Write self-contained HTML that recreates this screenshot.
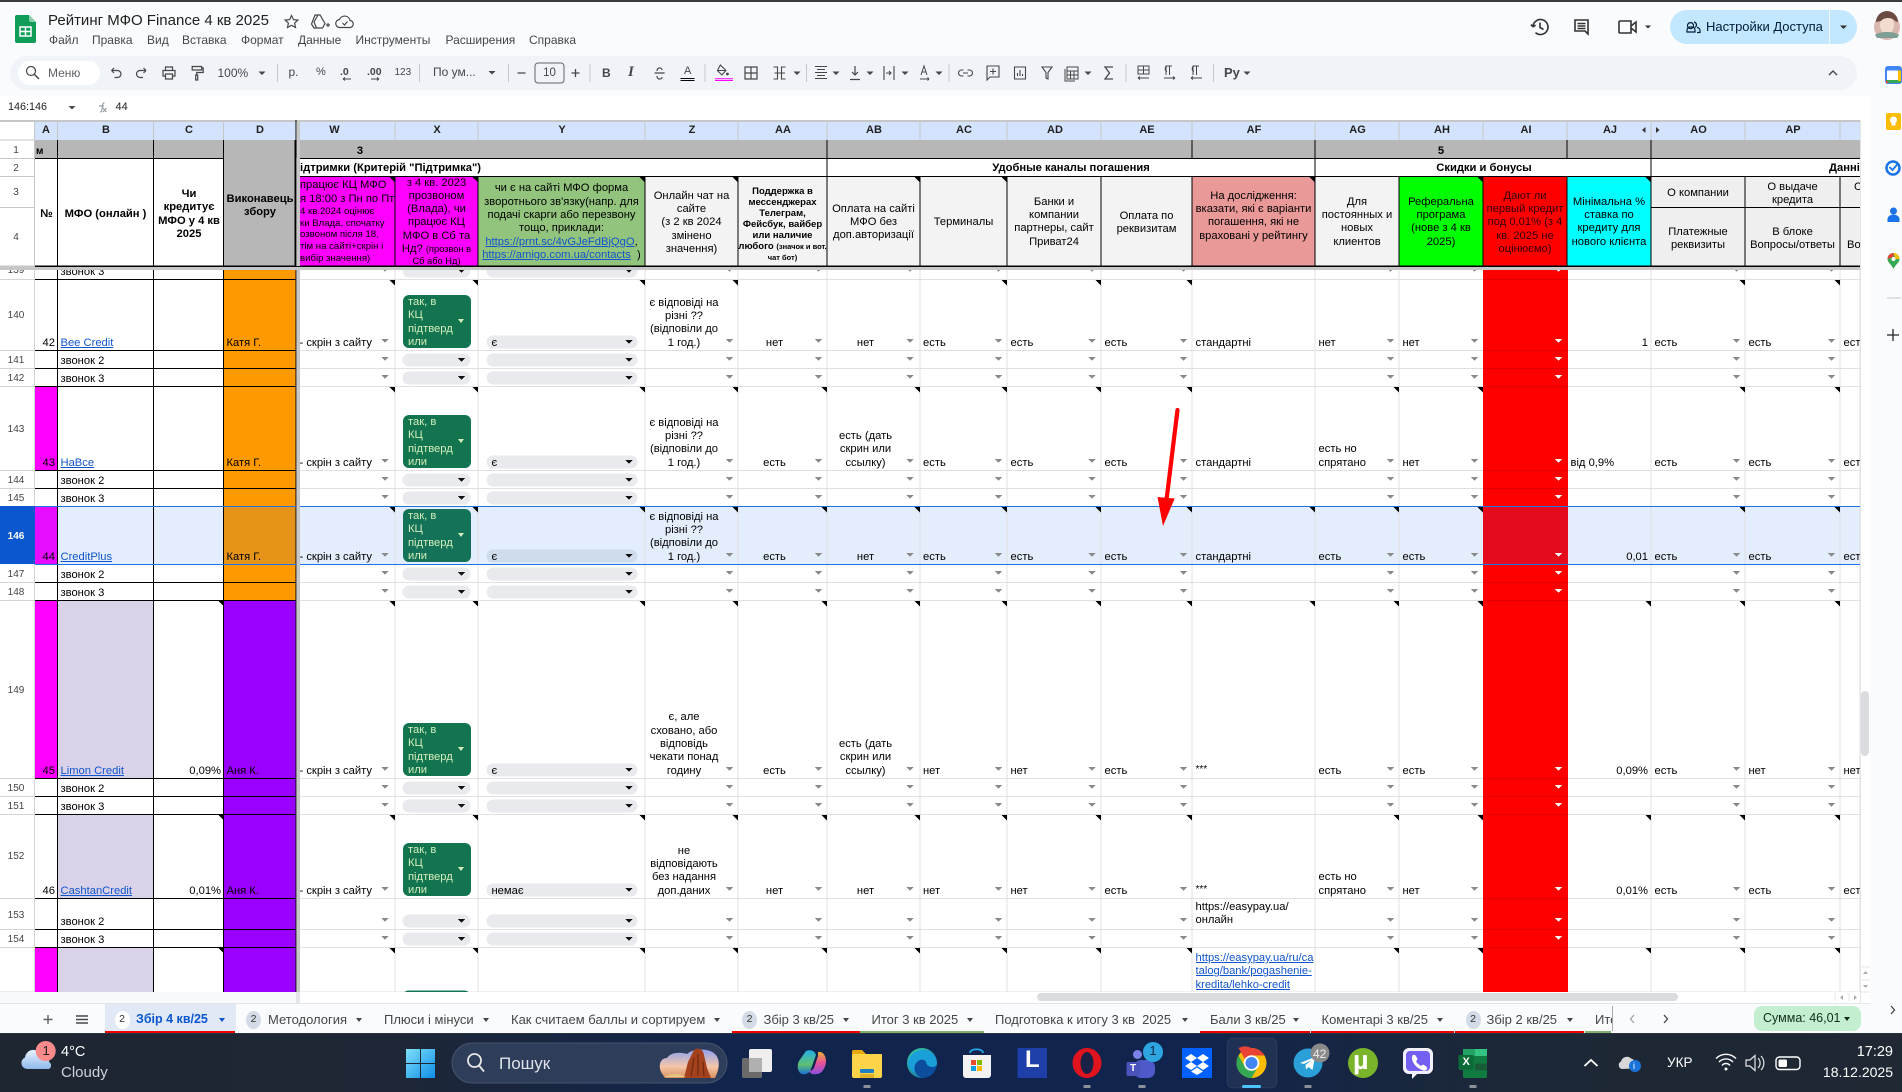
<!DOCTYPE html>
<html lang="uk"><head><meta charset="utf-8"><title>Рейтинг МФО Finance 4 кв 2025</title>
<style>
html,body{margin:0;padding:0;width:1902px;height:1092px;overflow:hidden;background:#f9fbfd;font-family:"Liberation Sans",sans-serif;color:#000}
svg{position:absolute;left:0;top:0}
.x{position:absolute;white-space:nowrap}
#grid{position:absolute;left:0;top:0;width:1860px;height:992px;overflow:hidden;font-size:11.2px;line-height:13.33px}
.h{position:absolute;text-align:center;white-space:nowrap;overflow:hidden;margin-top:1px}
.b{font-weight:bold}
.cl{position:absolute;top:123.5px;font-weight:bold;font-size:11px;color:#1f1f1f;text-align:center;transform:translateX(-50%)}
.rn{position:absolute;left:0;width:32px;text-align:center;font-size:10px;color:#444;line-height:12px;margin-top:1.5px}
.r{position:absolute;left:0;width:1860px;overflow:hidden}
.r>*{position:absolute;bottom:0;white-space:nowrap}
.A{left:36px;width:19px;text-align:right}.B{left:60.5px}.C{left:154px;width:67px;text-align:right}.D{left:226.5px}
.W{left:299.5px}.Yt{left:491.5px}
.Z{left:645px;width:78px;text-align:center}.AA{left:738px;width:73px;text-align:center}.AB{left:827px;width:77px;text-align:center}
.AC{left:923px}.AD{left:1010.5px}.AE{left:1104.5px}.AF{left:1195.5px}.AG{left:1318.5px}.AH{left:1402.5px}
.AJ{left:1568px;width:80px;text-align:right}.AJl{left:1570.5px}.AO{left:1654.5px}.AP{left:1748.5px}.AQ{left:1843.5px}
.r>.g{left:402.5px;width:68px;height:53px;bottom:2px;background:#137550;border-radius:6px;color:#d4edbc;box-sizing:border-box;padding-left:5.5px;padding-top:1px}
.g:after{content:"";position:absolute;left:55px;top:24px;border:3.5px solid transparent;border-top:4px solid #d4edbc;border-bottom:0}
a,.l{color:#1155cc;text-decoration:underline}
.m{position:absolute;top:33px;font-size:12px;color:#444746}
.tb{position:absolute;top:1012px;font-size:13px;line-height:15px;color:#444746;white-space:nowrap}
.bd{position:absolute;top:1011px;width:15px;height:18px;border-radius:50%;background:#d3dbe6;font-size:10.5px;text-align:center;line-height:17px;color:#333}
.tr{position:absolute;border:3.5px solid transparent;border-top:4px solid #444746;border-bottom:0;width:0;height:0}
.tbi{position:absolute;font-size:11.5px;color:#444746;white-space:nowrap;line-height:14px}
.w{position:absolute;color:#fff;white-space:nowrap}
</style></head><body>

<svg width="1902" height="1092" viewBox="0 0 1902 1092" shape-rendering="crispEdges" style="z-index:1">
<defs>
<g id="aa" fill="#8a8a8a"><path d="M381.5 0h7l-3.5 4zM726 0h7l-3.5 4zM815 0h7l-3.5 4zM906.5 0h7l-3.5 4zM995 0h7l-3.5 4zM1088.5 0h7l-3.5 4zM1180 0h7l-3.5 4zM1387 0h7l-3.5 4zM1471 0h7l-3.5 4zM1733 0h7l-3.5 4zM1828 0h7l-3.5 4z"/><path d="M1555 0h7l-3.5 4z" fill="#fff"/></g>
<g id="gc"><rect x="402.5" width="68" height="13" rx="6.5" fill="#e8eaed" shape-rendering="auto"/><rect x="486.5" width="151" height="13" rx="6.5" fill="#e8eaed" shape-rendering="auto"/><path d="M458 4.5h7l-3.5 4zM625.5 4.5h7l-3.5 4z" fill="#111"/></g>
<g id="yc"><rect x="486.5" width="151" height="13" rx="6.5" shape-rendering="auto"/><path d="M625.5 4.5h7l-3.5 4z" fill="#111"/></g>
<path id="nn" d="M389.500 0h5.500v5.500zM472.500 0h5.500v5.500zM639.500 0h5.500v5.500zM732.500 0h5.500v5.500zM821.500 0h5.500v5.500zM914.500 0h5.500v5.500zM1001.500 0h5.500v5.500zM1095.500 0h5.500v5.500zM1186.500 0h5.500v5.500zM1393.500 0h5.500v5.500zM1477.500 0h5.500v5.500zM1739.500 0h5.500v5.500zM1834.500 0h5.500v5.500z" fill="#000" shape-rendering="auto"/>
<path id="n3" d="M218.500 0h5.500v5.500zM1645.500 0h5.500v5.500z" fill="#000" shape-rendering="auto"/>
<path id="nf" d="M1309.500 0h5.500v5.500z" fill="#000" shape-rendering="auto"/>
</defs>
<rect x="0" y="96" width="1870" height="24" fill="#fff"/>
<rect x="0" y="120" width="1860" height="872" fill="#fff"/>
<!-- orange / purple -->
<rect x="224" y="270" width="72" height="330" fill="#ff9900"/>
<rect x="224" y="600" width="72" height="392" fill="#9900ff"/>
<!-- selected row -->
<rect x="35" y="506" width="261" height="58" fill="#e3edfc"/>
<rect x="300" y="506" width="1560" height="58" fill="#e3edfc"/>
<rect x="224" y="506" width="72" height="58" fill="#e59419"/>
<!-- magenta / lavender -->
<rect x="35" y="386" width="22" height="84" fill="#ff00ff"/>
<rect x="35" y="506" width="22" height="58" fill="#e80cff"/>
<rect x="35" y="600" width="22" height="178" fill="#ff00ff"/>
<rect x="35" y="947" width="22" height="45" fill="#ff00ff"/>
<rect x="57" y="600" width="96" height="178" fill="#d9d2e9"/>
<rect x="57" y="814" width="96" height="84" fill="#d9d2e9"/>
<rect x="57" y="947" width="96" height="45" fill="#d9d2e9"/>
<!-- gray grid -->
<path d="M395 270V992M478 270V992M645 270V992M738 270V992M827 270V992M920 270V992M1007 270V992M1101 270V992M1192 270V992M1315 270V992M1399 270V992M1651 270V992M1745 270V992M1840 270V992M1860 270V992" stroke="#e0e0e0" fill="none"/>
<path d="M300 279.500H1860M300 350.500H1860M300 368.500H1860M300 386.500H1860M300 470.500H1860M300 488.500H1860M300 582.500H1860M300 600.500H1860M300 778.500H1860M300 796.500H1860M300 814.500H1860M300 898.500H1860M300 929.500H1860M300 947.500H1860M300 992H1860" stroke="#e0e0e0" fill="none"/>
<path d="M0 279.500H35M0 350.500H35M0 368.500H35M0 386.500H35M0 470.500H35M0 488.500H35M0 582.500H35M0 600.500H35M0 778.500H35M0 796.500H35M0 814.500H35M0 898.500H35M0 929.500H35M0 947.500H35M0 992H35M34.500 120V992" stroke="#d4d4d4" fill="none"/>
<rect x="1483" y="270" width="85" height="722" fill="#ff0000"/>
<rect x="1483" y="506" width="85" height="58" fill="#e40c1c"/>
<path d="M1483 279.500H1568M1483 350.500H1568M1483 368.500H1568M1483 386.500H1568M1483 470.500H1568M1483 488.500H1568M1483 582.500H1568M1483 600.500H1568M1483 778.500H1568M1483 796.500H1568M1483 814.500H1568M1483 898.500H1568M1483 929.500H1568M1483 947.500H1568" stroke="#e00000" fill="none"/>
<!-- black frozen grid -->
<path d="M35 279.500H296M35 350.500H296M35 368.500H296M35 386.500H296M35 470.500H296M35 488.500H296M35 582.500H296M35 600.500H296M35 778.500H296M35 796.500H296M35 814.500H296M35 898.500H296M35 929.500H296M35 947.500H296" stroke="#000" fill="none"/>
<path d="M57.500 270V992M153.500 270V992M223.500 270V992M296 270V992" stroke="#000" fill="none"/>
<!-- chips -->
<use href="#gc" y="264.500"/><use href="#gc" y="353.500"/><use href="#gc" y="371.500"/><use href="#gc" y="473.500"/><use href="#gc" y="491.500"/><use href="#gc" y="567.500"/><use href="#gc" y="585.500"/><use href="#gc" y="781.500"/><use href="#gc" y="799.500"/><use href="#gc" y="914.500"/><use href="#gc" y="932.500"/>
<use href="#yc" y="335.500" fill="#e8eaed"/><use href="#yc" y="455.500" fill="#e8eaed"/><use href="#yc" y="549.500" fill="#cfdcec"/><use href="#yc" y="763.500" fill="#e8eaed"/><use href="#yc" y="883.500" fill="#e8eaed"/>
<rect x="402.500" y="990.500" width="68" height="12" rx="6" fill="#137550" shape-rendering="auto"/>
<!-- arrows -->
<use href="#aa" y="268"/><use href="#aa" y="339"/><use href="#aa" y="357"/><use href="#aa" y="375"/><use href="#aa" y="459"/><use href="#aa" y="477"/><use href="#aa" y="495"/><use href="#aa" y="553"/><use href="#aa" y="571"/><use href="#aa" y="589"/><use href="#aa" y="767"/><use href="#aa" y="785"/><use href="#aa" y="803"/><use href="#aa" y="887"/><use href="#aa" y="918"/><use href="#aa" y="936"/>
<!-- notes -->
<path d="M389.500 280h5.500v5.500zM472.500 280h5.500v5.500zM639.500 280h5.500v5.500zM732.500 280h5.500v5.500zM1001.500 280h5.500v5.500zM1095.500 280h5.500v5.500zM1186.500 280h5.500v5.500zM1739.500 280h5.500v5.500zM1834.500 280h5.500v5.500z" fill="#000" shape-rendering="auto"/>
<use href="#nn" y="387"/><use href="#nn" y="507"/><use href="#nf" y="507"/><use href="#nn" y="601"/><use href="#n3" y="601"/><use href="#nf" y="601"/><use href="#nn" y="815"/><use href="#n3" y="815"/><use href="#nn" y="948"/><use href="#n3" y="948"/>
<!-- selection -->
<rect x="0" y="506" width="35" height="58" fill="#0b57d0"/>
<path d="M35 506.500H296M300 506.500H1860M35 564.500H296M300 564.500H1860" stroke="#1a73e8" fill="none"/>
<!-- column headers -->
<rect x="0" y="120" width="1860" height="150" fill="#fff"/>
<rect x="35" y="120" width="261" height="20" fill="#d3e3fd"/>
<rect x="300" y="120" width="1560" height="20" fill="#d3e3fd"/>
<path d="M0 120.500H1860M0 140H35M0 158.500H35M0 176.500H35M0 207.500H35M0 266H35" stroke="#c7c7c7" fill="none"/>
<path d="M0 121.500H1860" stroke="#c7c7c7" fill="none"/>
<path d="M34.500 120V270M57.500 122V140M153.500 122V140M223.500 122V140M395 122V140M478 122V140M645 122V140M738 122V140M827 122V140M920 122V140M1007 122V140M1101 122V140M1192 122V140M1315 122V140M1399 122V140M1483 122V140M1567 122V140M1651 122V140M1745 122V140M1840 122V140" stroke="#c4c7c5" fill="none"/>
<path d="M1642 130l3.500-3v6zM1656 127l3.500 3-3.500 3z" fill="#333" shape-rendering="auto"/>
<!-- header rows -->
<rect x="35" y="140" width="1825" height="18" fill="#b7b7b7"/>
<rect x="224" y="140" width="72" height="126" fill="#b7b7b7"/>
<rect x="300" y="177" width="95" height="89" fill="#ff00ff"/>
<rect x="395" y="177" width="83" height="89" fill="#ff00ff"/>
<rect x="478" y="177" width="167" height="89" fill="#93c47d"/>
<rect x="645" y="177" width="547" height="89" fill="#f3f3f3"/>
<rect x="1192" y="177" width="123" height="89" fill="#ea9999"/>
<rect x="1315" y="177" width="84" height="89" fill="#f3f3f3"/>
<rect x="1399" y="177" width="84" height="89" fill="#00ff00"/>
<rect x="1483" y="177" width="84" height="89" fill="#ff0000"/>
<rect x="1567" y="177" width="84" height="89" fill="#00ffff"/>
<rect x="1651" y="177" width="209" height="89" fill="#efefef"/>
<path d="M35 158.500H224M300 158.500H1860M300 176.500H1860M35 266H296M300 266H1860M1651 207.500H1860" stroke="#000" fill="none"/>
<path d="M57.500 140V266M153.500 140V266M223.500 140V266M296 120V266M295 140V266" stroke="#000" fill="none"/>
<path d="M827 140V177M1192 140V158M1315 140V177M1567 140V158M1651 140V177M395 177V266M478 177V266M645 177V266M738 177V266M827 177V266M920 177V266M1007 177V266M1101 177V266M1192 177V266M1315 177V266M1399 177V266M1483 177V266M1567 177V266M1651 177V266M1745 177V266M1840 177V266" stroke="#000" fill="none"/>
<path d="M389.500 177h5.500v5.500zM472.500 177h5.500v5.500zM639.500 177h5.500v5.500zM732.500 177h5.500v5.500zM914.500 177h5.500v5.500zM1001.500 177h5.500v5.500zM1309.500 177h5.500v5.500zM1477.500 177h5.500v5.500zM1645.500 177h5.500v5.500z" fill="#000" shape-rendering="auto"/>
<!-- freeze bars -->
<rect x="297" y="120" width="3" height="872" fill="#c7c7c7"/>
<rect x="0" y="266" width="1860" height="4" fill="#c7c7c7"/>
<path d="M0 266.500H1860" stroke="#000" fill="none"/>
<rect x="0" y="266" width="35" height="1" fill="#c7c7c7"/>
<rect x="296" y="266" width="4" height="1" fill="#000"/>
<!-- lower bars -->
<rect x="0" y="992" width="1860" height="11" fill="#fff"/>
<rect x="0" y="992" width="296" height="11" fill="#f8f9fa"/>
<rect x="296" y="992" width="4" height="11" fill="#e3e5e8"/>
<rect x="1037" y="993" width="641" height="8" rx="4" fill="#dadce0" shape-rendering="auto"/>
<path d="M1835 993V1001M1849 993V1001" stroke="#e5e5e5" fill="none"/>
<path d="M1843 995l-3 2.500 3 2.500zM1854 995l3 2.500-3 2.500zM1866 972l-2.500 3h5zM1866 1000l-2.500-3h5z" fill="#aaa" shape-rendering="auto"/>
<rect x="1860" y="120" width="10" height="883" fill="#fff"/>
<path d="M1860.500 120V1003" stroke="#e4e4e4" fill="none"/>
<rect x="1861" y="691" width="8" height="65" rx="4" fill="#dadce0" shape-rendering="auto"/>
<path d="M1860 967H1870M1860 980H1870M1860 992H1870" stroke="#e6e6e6" fill="none"/>
<path d="M1865.500 971l-2.500 3h5zM1865.500 988l-2.500-3h5z" fill="#aaa" shape-rendering="auto"/>
<rect x="0" y="1003" width="1870" height="1" fill="#e3e5e8"/>
<rect x="0" y="0" width="1902" height="2" fill="#3c3c3c"/>
</svg>

<div id="grid" style="z-index:2">
<div class="cl" style="left:46px">A</div><div class="cl" style="left:106px">B</div><div class="cl" style="left:189px">C</div><div class="cl" style="left:260px">D</div><div class="cl" style="left:334.500px">W</div><div class="cl" style="left:437px">X</div><div class="cl" style="left:562px">Y</div><div class="cl" style="left:692px">Z</div><div class="cl" style="left:783px">AA</div><div class="cl" style="left:874px">AB</div><div class="cl" style="left:964px">AC</div><div class="cl" style="left:1055px">AD</div><div class="cl" style="left:1147px">AE</div><div class="cl" style="left:1254px">AF</div><div class="cl" style="left:1357.500px">AG</div><div class="cl" style="left:1442px">AH</div><div class="cl" style="left:1526px">AI</div><div class="cl" style="left:1610px">AJ</div><div class="cl" style="left:1698.500px">AO</div><div class="cl" style="left:1793px">AP</div>

<div class="rn" style="top:143px">1</div><div class="rn" style="top:161px">2</div><div class="rn" style="top:185px">3</div><div class="rn" style="top:230px">4</div>
<div class="h b" style="left:36px;top:144px;font-size:10px">м</div>
<div class="h b" style="left:340px;top:144px;width:40px">3</div>
<div class="h b" style="left:1421px;top:144px;width:40px">5</div>
<div class="h b" style="left:36px;top:207px;width:21px">№</div>
<div class="h b" style="left:58px;top:207px;width:95px">МФО (онлайн )</div>
<div class="h b" style="left:154px;top:187px;width:70px">Чи<br>кредитує<br>МФО у 4 кв<br>2025</div>
<div class="h b" style="left:225px;top:192px;width:70px">Виконавець<br>збору</div>
<div class="h b" style="left:300px;top:161px;width:300px;text-align:left">ідтримки (Критерій "Підтримка")</div>
<div class="h b" style="left:920px;top:161px;width:302px">Удобные каналы погашения</div>
<div class="h b" style="left:1400px;top:161px;width:168px">Скидки и бонусы</div>
<div class="h b" style="left:1829px;top:161px;width:31px;text-align:left">Данні</div>

<div class="h" style="left:300px;top:178.300px;width:95px;text-align:left">працює КЦ МФО<br>я 18:00 з Пн по Пт</div>
<div class="h" style="left:300px;top:205px;width:95px;text-align:left;font-size:9.6px;line-height:11.700px">4 кв.2024 оцінює<br>ки Влада, спочатку<br>озвоном після 18,<br>тім на сайті+скрін і<br>вибір значення)</div>
<div class="h" style="left:395px;top:175.500px;width:83px;height:80px">з 4 кв. 2023<br>прозвоном<br>(Влада), чи<br>працює КЦ<br>МФО в Сб та<br>Нд? <span style="font-size:9.300px">(прозвон в</span></div>
<div class="h" style="left:395px;top:254px;width:83px;font-size:9.300px;line-height:12px">Сб або Нд)</div>
<div class="h" style="left:478px;top:181.300px;width:167px">чи є на сайті МФО форма<br>зворотнього зв'язку(напр. для<br>подачі скарги або перезвону<br>тощо, приклади:<br><span class="l">https://prnt.sc/4vGJeFdBjQgO</span>,<br><span class="l">https://amigo.com.ua/contacts</span>&nbsp; )</div>
<div class="h" style="left:645px;top:188.800px;width:93px">Онлайн чат на<br>сайте<br>(з 2 кв 2024<br>змінено<br>значення)</div>
<div class="h b" style="left:738px;top:184.500px;width:89px;font-size:9.500px;line-height:11px">Поддержка в<br>мессенджерах<br>Телеграм,<br>Фейсбук, вайбер<br>или наличие<br>любого <span style="font-size:7.500px">(значок и вот.</span><br><span style="font-size:7.500px">чат бот)</span></div>
<div class="h" style="left:827px;top:201.700px;width:93px">Оплата на сайті<br>МФО без<br>доп.авторизації</div>
<div class="h" style="left:920px;top:214.500px;width:87px">Терминалы</div>
<div class="h" style="left:1007px;top:194.700px;width:94px">Банки и<br>компании<br>партнеры, сайт<br>Приват24</div>
<div class="h" style="left:1101px;top:208.700px;width:91px">Оплата по<br>реквизитам</div>
<div class="h" style="left:1192px;top:188.800px;width:123px">На дослідження:<br>вказати, які є варіанти<br>погашення, які не<br>враховані у рейтингу</div>
<div class="h" style="left:1315px;top:194.700px;width:84px">Для<br>постоянных и<br>новых<br>клиентов</div>
<div class="h" style="left:1399px;top:194.700px;width:84px">Реферальна<br>програма<br>(нове з 4 кв<br>2025)</div>
<div class="h" style="left:1483px;top:188.800px;width:84px;color:#300">Дают ли<br>первый кредит<br>под 0,01% (з 4<br>кв. 2025 не<br>оцінюємо)</div>
<div class="h" style="left:1567px;top:194.700px;width:84px">Мінімальна %<br>ставка по<br>кредиту для<br>нового клієнта</div>
<div class="h" style="left:1651px;top:186px;width:94px">О компании</div>
<div class="h" style="left:1745px;top:180px;width:95px">О выдаче<br>кредита</div>
<div class="h" style="left:1854px;top:180px;width:6px;text-align:left">О</div>
<div class="h" style="left:1651px;top:224.700px;width:94px">Платежные<br>реквизиты</div>
<div class="h" style="left:1745px;top:224.700px;width:95px">В блоке<br>Вопросы/ответы</div>
<div class="h" style="left:1847px;top:238px;width:13px;text-align:left">Во</div>

<!-- row numbers -->
<div style="position:absolute;left:0;top:270px;width:35px;height:9px;overflow:hidden"><div class="rn" style="top:-7px">139</div></div>
<div class="rn" style="top:308px">140</div><div class="rn" style="top:353px">141</div><div class="rn" style="top:371px">142</div><div class="rn" style="top:422px">143</div><div class="rn" style="top:473px">144</div><div class="rn" style="top:491px">145</div>
<div class="rn b" style="top:529px;color:#fff">146</div>
<div class="rn" style="top:567px">147</div><div class="rn" style="top:585px">148</div><div class="rn" style="top:683px">149</div><div class="rn" style="top:781px">150</div><div class="rn" style="top:799px">151</div><div class="rn" style="top:849px">152</div><div class="rn" style="top:908px">153</div><div class="rn" style="top:932px">154</div>

<div class="r" style="top:270px;height:9px"><span class="B">звонок 3</span></div>

<div class="r" style="top:280px;height:70px"><span class="A">42</span><span class="B l">Bee Credit</span><span class="D">Катя Г.</span><span class="W">- скрін з сайту</span>
<div class="g">так, в<br>КЦ<br>підтверд<br>или</div><span class="Yt">є</span>
<div class="Z">є відповіді на<br>різні ??<br>(відповіли до<br>1 год.)</div><span class="AA">нет</span><span class="AB">нет</span><span class="AC">есть</span><span class="AD">есть</span><span class="AE">есть</span><span class="AF">стандартні</span><span class="AG">нет</span><span class="AH">нет</span><span class="AJ">1</span><span class="AO">есть</span><span class="AP">есть</span><span class="AQ">есть</span></div>
<div class="r" style="top:351px;height:17px"><span class="B">звонок 2</span></div>
<div class="r" style="top:369px;height:17px"><span class="B">звонок 3</span></div>

<div class="r" style="top:387px;height:83px"><span class="A">43</span><span class="B l">НаВсе</span><span class="D">Катя Г.</span><span class="W">- скрін з сайту</span>
<div class="g">так, в<br>КЦ<br>підтверд<br>или</div><span class="Yt">є</span>
<div class="Z">є відповіді на<br>різні ??<br>(відповіли до<br>1 год.)</div><span class="AA">есть</span><div class="AB">есть (дать<br>скрин или<br>ссылку)</div><span class="AC">есть</span><span class="AD">есть</span><span class="AE">есть</span><span class="AF">стандартні</span><div class="AG">есть но<br>спрятано</div><span class="AH">нет</span><span class="AJl">від 0,9%</span><span class="AO">есть</span><span class="AP">есть</span><span class="AQ">есть</span></div>
<div class="r" style="top:471px;height:17px"><span class="B">звонок 2</span></div>
<div class="r" style="top:489px;height:17px"><span class="B">звонок 3</span></div>

<div class="r" style="top:507px;height:57px"><span class="A">44</span><span class="B l">CreditPlus</span><span class="D">Катя Г.</span><span class="W">- скрін з сайту</span>
<div class="g" style="background:#137258">так, в<br>КЦ<br>підтверд<br>или</div><span class="Yt">є</span>
<div class="Z">є відповіді на<br>різні ??<br>(відповіли до<br>1 год.)</div><span class="AA">есть</span><span class="AB">нет</span><span class="AC">есть</span><span class="AD">есть</span><span class="AE">есть</span><span class="AF">стандартні</span><span class="AG">есть</span><span class="AH">есть</span><span class="AJ">0,01</span><span class="AO">есть</span><span class="AP">есть</span><span class="AQ">есть</span></div>
<div class="r" style="top:565px;height:17px"><span class="B">звонок 2</span></div>
<div class="r" style="top:583px;height:17px"><span class="B">звонок 3</span></div>

<div class="r" style="top:601px;height:177px"><span class="A">45</span><span class="B l">Limon Credit</span><span class="C">0,09%</span><span class="D">Аня К.</span><span class="W">- скрін з сайту</span>
<div class="g">так, в<br>КЦ<br>підтверд<br>или</div><span class="Yt">є</span>
<div class="Z">є, але<br>сховано, або<br>відповідь<br>чекати понад<br>годину</div><span class="AA">есть</span><div class="AB">есть (дать<br>скрин или<br>ссылку)</div><span class="AC">нет</span><span class="AD">нет</span><span class="AE">есть</span><span class="AF" style="font-size:10px;bottom:1.500px">***</span><span class="AG">есть</span><span class="AH">есть</span><span class="AJ">0,09%</span><span class="AO">есть</span><span class="AP">нет</span><span class="AQ">нет</span></div>
<div class="r" style="top:779px;height:17px"><span class="B">звонок 2</span></div>
<div class="r" style="top:797px;height:17px"><span class="B">звонок 3</span></div>

<div class="r" style="top:815px;height:83px"><span class="A">46</span><span class="B l">CashtanCredit</span><span class="C">0,01%</span><span class="D">Аня К.</span><span class="W">- скрін з сайту</span>
<div class="g">так, в<br>КЦ<br>підтверд<br>или</div><span class="Yt">немає</span>
<div class="Z">не<br>відповідають<br>без надання<br>доп.даних</div><span class="AA">нет</span><span class="AB">нет</span><span class="AC">нет</span><span class="AD">нет</span><span class="AE">есть</span><span class="AF" style="font-size:10px;bottom:1.500px">***</span><div class="AG">есть но<br>спрятано</div><span class="AH">нет</span><span class="AJ">0,01%</span><span class="AO">есть</span><span class="AP">есть</span><span class="AQ">есть</span></div>
<div class="r" style="top:899px;height:30px"><span class="B">звонок 2</span><div class="AF" style="bottom:1.500px">https://easypay.ua/<br>онлайн</div></div>
<div class="r" style="top:930px;height:17px"><span class="B">звонок 3</span></div>
<div class="h l" style="left:1195.500px;top:951px;width:119px;text-align:left">https://easypay.ua/ru/ca<br>talog/bank/pogashenie-<br>kredita/lehko-credit</div>
</div>

<!-- top bar -->
<div class="x" style="left:48px;top:12px;font-size:15px;line-height:18px;color:#1f1f1f;z-index:3">Рейтинг МФО Finance 4 кв 2025</div>
<div style="position:absolute;left:0;top:0;z-index:3">
<span class="m" style="left:49px">Файл</span><span class="m" style="left:92px">Правка</span><span class="m" style="left:147px">Вид</span><span class="m" style="left:182px">Вставка</span><span class="m" style="left:241px">Формат</span><span class="m" style="left:298px">Данные</span><span class="m" style="left:355.500px">Инструменты</span><span class="m" style="left:445.500px">Расширения</span><span class="m" style="left:529px">Справка</span>
</div>
<div class="x" style="left:1706px;top:19px;font-size:13px;line-height:16px;color:#001d35;z-index:3">Настройки Доступа</div>
<svg width="1902" height="1092" style="z-index:1">
<rect x="10" y="56" width="1847" height="34" rx="17" fill="#f0f4f9"/>
<rect x="18" y="61" width="82" height="24" rx="12" fill="#fff"/>
<rect x="1670" y="10" width="187" height="34" rx="17" fill="#c2e7ff"/>
<path d="M1829.500 10V44" stroke="#f0f8ff"/>
<rect x="535" y="63" width="29" height="20" rx="3" fill="none" stroke="#5f6368"/>
<path d="M277.500 64V82M419.500 64V82M508.500 64V82M590 64V82M705 64V82M806.500 64V82M949 64V82M1126 64V82M1213.500 64V82" stroke="#c7c7c7"/>
</svg>
<svg width="1902" height="1092" style="z-index:3" fill="none" stroke="#444746" stroke-width="1.200">
<!-- sheets logo -->
<path d="M15 17a2 2 0 0 1 2-2h12l7 7v19a2 2 0 0 1-2 2H17a2 2 0 0 1-2-2z" fill="#0f9d58" stroke="none"/>
<path d="M29 15l7 7h-5a2 2 0 0 1-2-2z" fill="#87ceac" stroke="none"/>
<path d="M20 27h11v9H20zM25.500 27v9M20 31.500h11" stroke="#fff" stroke-width="1.500"/>
<!-- star, drive, cloud -->
<path d="M291.500 15.500l1.900 4.100 4.500.5-3.300 3 .9 4.400-4-2.200-4 2.200.9-4.400-3.300-3 4.500-.5z"/>
<path d="M315 15h5l5 8.500-2.500 4.500h-8.500L311.500 24zM318 15l-4 7 2.500 6M326 25h4M328 23v4"/>
<path d="M340 27.500a4 4 0 0 1-.5-8 5.500 5.500 0 0 1 10.500 1 3.500 3.500 0 0 1-.5 7zM342.500 23l2 2 3-3.500"/>
<!-- history, comment, meet, share -->
<path d="M1533 27a7.500 7.500 0 1 1 2.500 5.600M1533 27l-2-2.500M1533 27l2.500-2M1540 22.500V27.500l3.500 2" stroke-width="1.600" stroke="#333"/>
<path d="M1575 20h13v14l-3-3h-10zM1577.500 23.500h8M1577.500 26h8M1577.500 28.500h8" stroke-width="1.600" stroke="#333"/>
<path d="M1620 21h11v12h-11a1 1 0 0 1-1-1V22a1 1 0 0 1 1-1zM1631 26l5-4v10l-5-4" stroke-width="1.600" stroke="#333"/>
<path d="M1645 25.500h6l-3 3zM1840 25.500h7l-3.500 3.500z" fill="#333" stroke="none"/>
<path d="M1687 32v-2a3 3 0 0 1 3-3h2a3 3 0 0 1 3 3v2zM1688 24a3 3 0 1 0 5 0 3 3 0 0 0-5 0zM1694 22a3 3 0 0 1 1 5.500M1697 32.500h3v-2a3 3 0 0 0-3-3" stroke="#001d35"/>
<circle cx="1887" cy="27" r="13" fill="#d9b6ae" stroke="none"/>
<ellipse cx="1887" cy="25" rx="7" ry="9" fill="#f1dccf" stroke="none"/>
<path d="M1876 22a11 11 0 0 1 22 0l-3-1c-3-4-11-4-14 0z" fill="#6a4a42" stroke="none"/>
<path d="M1875 35c4-4 20-4 24 0l-2 3h-20z" fill="#7f9f96" stroke="none"/>
<!-- toolbar icons -->
<g transform="translate(32.500,72.500)"><circle cx="-1.500" cy="-1.500" r="4.500"/><path d="M2 2l4.500 4.500" stroke-width="1.500"/></g>
<g transform="translate(115.500,73)"><path d="M-4-2.500h6a3.500 3.500 0 0 1 0 7h-3M-4-2.500l2.500-2.500M-4-2.500l2.500 2.500"/></g>
<g transform="translate(142,73)"><path d="M4-2.500h-6a3.500 3.500 0 0 0 0 7h3M4-2.500l-2.500-2.500M4-2.500l-2.500 2.500"/></g>
<g transform="translate(169,73)"><path d="M-3.500-2.500v-3.500h7v3.500M-3.500 3H-6v-5.500h12V3H3.500M-3.500 1h7v5h-7z"/></g>
<g transform="translate(196.700,73)"><path d="M-4.500-6.500H5v3.500H-4.500zM5-5H6.500V-.5H0V2M-1 2h2v5h-2z"/></g>
<path d="M258.500 71.500h7l-3.500 3.500zM488.500 71h7l-3.500 3.500zM793.500 71.500h7l-3.500 3.500zM832.500 71.500h7l-3.500 3.500zM866.500 71.500h7l-3.500 3.500zM901.500 71.500h7l-3.500 3.500zM935.500 71.500h7l-3.500 3.500zM1084.500 71.500h7l-3.500 3.500zM1243.500 71.500h7l-3.500 3.500z" fill="#444746" stroke="none"/>
<path d="M343 79h8M343 79l2-1.500M343 79l2 1.500M371 79h8M379 79l-2-1.500M379 79l-2 1.500" stroke-width="1"/>
<path d="M517.500 73h8M571.500 73h8M575.500 69v8" stroke-width="1.300"/>
<path d="M1829 75l4-4 4 4" stroke-width="1.400"/>
<g transform="translate(659.600,73)"><path d="M-5 0H5M-2.500-2a2.500 2.500 0 0 1 5-1M-2.500 3a2.500 2.500 0 0 0 5 1"/></g>
<g transform="translate(722.400,72)" ><path d="M-2-7l5.500 5.500L-.5 3-5-1.500zM-5-1.500h8" stroke-width="1.100"/><circle cx="5" cy="2" r="1.400" fill="#444746" stroke="none"/></g>
<path d="M715 78.700h18M715 80.500h18" stroke="#ff00ff" stroke-width="1"/>
<path d="M680.500 78.500h14" stroke="#000" stroke-width="1"/><path d="M680.500 80.500h14" stroke="#000" stroke-width="1"/>
<path d="M745 67h12v12h-12zM751 67v12M745 73h12"/>
<path d="M773.500 67h4v12h-4M785.500 67h-4v12h4M779.500 73h-2M781.500 73h-2M774.500 73h2.500M785 73h-3" stroke-width="1.100"/>
<path d="M815 66.500h12M817 69.500h8M815 72.500h12M817 75.500h8M815 78.500h12" stroke-width="1.100"/>
<path d="M855 66v9M852 72l3 3 3-3M850 79.500h10" stroke-width="1.200"/>
<path d="M884 66v14M894 66v14M886 73h5M889 71l2 2-2 2" stroke-width="1.100"/>
<path d="M921 75l3-9 3 9M922 72h4M920 79h9M929 79l-1.500-1.500M929 79l-1.500 1.500" stroke-width="1"/>
<path d="M963.500 70h-2a3 3 0 0 0 0 6h2M967.500 70h2a3 3 0 0 1 0 6h-2M963 73h5" stroke-width="1.100"/>
<path d="M987 66h12v11h-9l-3 3zM993 68.500v6M990 71.500h6" stroke-width="1.100"/>
<path d="M1014.500 67h11v12h-11zM1017.500 76v-3M1020 76v-6M1022.500 76v-2" stroke-width="1.100"/>
<path d="M1042 67h10l-4 5.500V79l-2-1v-5.500z" stroke-width="1.100"/>
<path d="M1067 67h11v12h-11zM1067 71h11M1070.500 71v8M1074 71v8M1067 75h11M1065 69v12h10" stroke-width="1"/>
<path d="M1113 67h-8l4.500 6-4.500 6h8" stroke-width="1.300"/>
<path d="M1138 66h11v8h-11zM1143.500 66v8M1138 70h11M1138 78h11M1138 78l2-1.500M1138 78l2 1.500" stroke-width="1"/>
<path d="M1166 75V66h6M1169.500 75V66M1167 66a3 3 0 0 0 0 5.500M1164 78h11M1175 78l-2-1.500M1175 78l-2 1.500" stroke-width="1"/>
<path d="M1193 75V66h6M1196.500 75V66M1194 66a3 3 0 0 0 0 5.500M1191 78h11M1191 78l2-1.500M1191 78l2 1.500" stroke-width="1"/>
<path d="M68.500 106h7l-3.500 3.500z" fill="#444746" stroke="none"/>
<path d="M100 112c2 0 2-2 2.300-5s.5-4 2.200-4M99 106h5M103 108l3.500 4M106.500 108l-3.500 4" stroke="#9aa0a6"/>
<!-- tab bar icons -->
<path d="M48 1015v9M43.500 1019.500h9" stroke="#5f6368" stroke-width="1.400"/>
<path d="M76 1016h12M76 1019.500h12M76 1023h12" stroke="#444746" stroke-width="1.400"/>
<path d="M1634 1015l-3.500 4 3.500 4" stroke="#a0a4a8" stroke-width="1.300"/>
<path d="M1664 1015l3.500 4-3.500 4" stroke="#444746" stroke-width="1.300"/>
<path d="M1891 1006l3.500 4-3.500 4" stroke="#444746" stroke-width="1.300"/>
<!-- side panel -->
<path d="M1887 298h14" stroke="#d0d3d6"/>
<path d="M1893 329v12M1887 335h12" stroke="#222" stroke-width="1.300"/>
<rect x="1886" y="67" width="15" height="16" rx="2" fill="#fff" stroke="#4285f4" stroke-width="2"/><rect x="1886" y="80" width="15" height="3" fill="#34a853" stroke="none"/><rect x="1898" y="70" width="3" height="11" fill="#fbbc04" stroke="none"/><rect x="1886" y="67" width="15" height="3.500" fill="#4285f4" stroke="none"/><path d="M1886 83l-0-3 3 3z" fill="#ea4335" stroke="none"/>
<rect x="1886" y="113" width="15" height="17" rx="2" fill="#fbbc04" stroke="none"/><circle cx="1893.500" cy="120" r="3.500" fill="#fff" stroke="none"/><rect x="1891.500" y="123" width="4" height="2.500" fill="#fff" stroke="none"/>
<circle cx="1893" cy="168" r="6.500" stroke="#1a73e8" stroke-width="2.500" fill="#fff"/><path d="M1889.500 167l3 3 6-7" stroke="#1a73e8" stroke-width="1.800"/>
<circle cx="1893.500" cy="211" r="3.500" fill="#1a73e8" stroke="none"/><path d="M1887.500 222v-3a6 4.500 0 0 1 12 0v3z" fill="#1a73e8" stroke="none"/>
<path d="M1893.500 253a6 6 0 0 1 6 6c0 3.500-4 5.500-6 10-2-4.500-6-6.500-6-10a6 6 0 0 1 6-6z" fill="#34a853" stroke="none"/><path d="M1887.500 259a6 6 0 0 1 6-6v4z" fill="#ea4335" stroke="none"/><path d="M1893.500 253a6 6 0 0 1 6 6l-4 0z" fill="#fbbc04" stroke="none"/><circle cx="1893.500" cy="259" r="2" fill="#fff" stroke="none"/>
</svg>

<!-- toolbar text -->
<div style="position:absolute;left:0;top:0;z-index:4;font-size:12px;color:#444746">
<span class="x" style="left:48px;top:66px;font-size:12px;line-height:14px;color:#5f6368">Меню</span>
<span class="x" style="left:217.500px;top:66px;line-height:15px">100%</span>
<span class="x" style="left:288.500px;top:65px;line-height:15px">р.</span>
<span class="x" style="left:316px;top:65px;line-height:15px;font-size:11px">%</span>
<span class="x" style="left:340px;top:65px;line-height:15px;font-size:10.500px;font-weight:bold">.0</span>
<span class="x" style="left:367px;top:65px;line-height:15px;font-size:10.500px;font-weight:bold">.00</span>
<span class="x" style="left:394.500px;top:65px;line-height:15px;font-size:10px">123</span>
<span class="x" style="left:433px;top:65px;line-height:15px">По ум...</span>
<span class="x" style="left:535px;top:66px;width:29px;text-align:center;line-height:15px;font-size:11.500px">10</span>
<span class="x" style="left:602px;top:65.500px;line-height:15px;font-weight:bold">B</span>
<span class="x" style="left:628px;top:64.500px;line-height:15px;font-weight:bold;font-style:italic;font-family:'Liberation Serif',serif;font-size:15px">I</span>
<span class="x" style="left:684px;top:64px;line-height:14px;font-size:11px">A</span>
<span class="x" style="left:1224px;top:65px;line-height:16px;font-size:13px;font-weight:bold">Ру</span>
<span class="x" style="left:8px;top:100px;line-height:14px;font-size:10.800px;color:#1f1f1f">146:146</span>
<span class="x" style="left:115.500px;top:100px;line-height:14px;font-size:11px;color:#1f1f1f">44</span>
</div>

<!-- tabs -->
<div style="position:absolute;left:0;top:1004px;width:1870px;height:29px;background:#f9fbfd;z-index:2"></div>
<div style="position:absolute;left:104.500px;top:1004px;width:131px;height:27px;background:#e1e9f7;z-index:2"></div>
<div style="position:absolute;left:105px;top:1031px;width:130px;height:2px;background:#e00;z-index:2"></div>
<div style="position:absolute;left:732px;top:1031px;width:127.500px;height:2px;background:#e00;z-index:2"></div>
<div style="position:absolute;left:860px;top:1031px;width:124px;height:2px;background:#7fb069;z-index:2"></div>
<div style="position:absolute;left:1200px;top:1031px;width:110px;height:2px;background:#e00;z-index:2"></div>
<div style="position:absolute;left:1310.500px;top:1031px;width:143.500px;height:2px;background:#e00;z-index:2"></div>
<div style="position:absolute;left:1455px;top:1031px;width:129px;height:2px;background:#e00;z-index:2"></div>
<div style="position:absolute;left:1584.500px;top:1031px;width:26.500px;height:2px;background:#7fb069;z-index:2"></div>
<div style="position:absolute;left:1754px;top:1006px;width:107px;height:25px;border-radius:8px;background:#c4eed0;z-index:2"></div>
<div style="z-index:3;position:absolute;left:0;top:0">
<div class="bd" style="left:114.500px;background:#fff">2</div><span class="tb" style="left:136px;color:#0b57d0;font-weight:bold;font-size:12.500px">Збір 4 кв/25</span><i class="tr" style="left:218.500px;top:1018px;border-top-color:#0b57d0"></i>
<div class="bd" style="left:246px">2</div><span class="tb" style="left:268px">Методология</span><i class="tr" style="left:355.500px;top:1018px"></i>
<span class="tb" style="left:384px">Плюси і мінуси</span><i class="tr" style="left:482.500px;top:1018px"></i>
<span class="tb" style="left:511px">Как считаем баллы и сортируем</span><i class="tr" style="left:713.500px;top:1018px"></i>
<div class="bd" style="left:742px">2</div><span class="tb" style="left:763.500px">Збір 3 кв/25</span><i class="tr" style="left:843px;top:1018px"></i>
<span class="tb" style="left:871.500px">Итог 3 кв 2025</span><i class="tr" style="left:967px;top:1018px"></i>
<span class="tb" style="left:995px">Подготовка к итогу 3 кв&nbsp; 2025</span><i class="tr" style="left:1181.500px;top:1018px"></i>
<span class="tb" style="left:1210px">Бали 3 кв/25</span><i class="tr" style="left:1292.500px;top:1018px"></i>
<span class="tb" style="left:1321.500px">Коментарі 3 кв/25</span><i class="tr" style="left:1436.500px;top:1018px"></i>
<div class="bd" style="left:1465.500px">2</div><span class="tb" style="left:1486.500px">Збір 2 кв/25</span><i class="tr" style="left:1566.500px;top:1018px"></i>
<span class="tb" style="left:1595px;width:17px;overflow:hidden">Итог</span>
<div style="position:absolute;left:1612px;top:1006px;width:1px;height:25px;background:#aaa"></div>
<span class="tb" style="left:1763px;top:1010.500px;color:#0f2d1a;font-size:12.500px">Сумма: 46,01</span><i class="tr" style="left:1843.500px;top:1016.500px;border-top-color:#0f2d1a"></i>
</div>

<!-- taskbar -->
<div style="position:absolute;left:0;top:1033px;width:1902px;height:59px;background:linear-gradient(90deg,#1e2632 0,#1e2735 20%,#11244c 38%,#10244e 62%,#1d2836 80%,#1f2833 100%);z-index:5;border-top:1px solid #2a3342;box-sizing:border-box"></div>
<svg width="1902" height="1092" style="z-index:6" fill="none">
<defs>
<linearGradient id="wn" x1="0" y1="0" x2="1" y2="1"><stop offset="0" stop-color="#7ee0f8"/><stop offset="1" stop-color="#0f8de8"/></linearGradient>
<linearGradient id="ed" x1="0" y1="0" x2="1" y2="1"><stop offset="0" stop-color="#3bd4a0"/><stop offset="1" stop-color="#0b57b0"/></linearGradient>
<linearGradient id="cp" x1="0" y1="0" x2="0" y2="1"><stop offset="0" stop-color="#25b0e8"/><stop offset=".6" stop-color="#60c070"/><stop offset="1" stop-color="#1a70d8"/></linearGradient>
<linearGradient id="cq" x1="0" y1="0" x2="0" y2="1"><stop offset="0" stop-color="#e8b030"/><stop offset=".5" stop-color="#e8509a"/><stop offset="1" stop-color="#8a50e0"/></linearGradient>
<linearGradient id="mt" x1="0" y1="0" x2="0" y2="1"><stop offset="0" stop-color="#8fa2ef"/><stop offset=".6" stop-color="#f5c6a8"/><stop offset="1" stop-color="#d89060"/></linearGradient>
<linearGradient id="cl" x1="0" y1="0" x2="0" y2="1"><stop offset="0" stop-color="#e8f2fc"/><stop offset="1" stop-color="#8fb8ec"/></linearGradient>
</defs>
<!-- weather -->
<path d="M27 1069a6 6 0 0 1-2-11.500 8.500 8.500 0 0 1 16-3 6.500 6.500 0 0 1 8 7.500 4 4 0 0 1 0 7z" fill="url(#cl)"/>
<circle cx="45.700" cy="1051" r="10" fill="#f98b8b"/>
<!-- windows -->
<path d="M406 1049h14v14h-14zM421 1049h14v14h-14zM406 1064h14v14h-14zM421 1064h14v14h-14z" fill="url(#wn)"/>
<!-- search -->
<rect x="452" y="1043" width="275" height="40" rx="20" fill="#2e3d59" stroke="#46546e"/>
<circle cx="474.500" cy="1060.500" r="6.500" stroke="#e8e8e8" stroke-width="1.800"/><path d="M479 1065.500l5 6" stroke="#e8e8e8" stroke-width="1.800"/>
<path d="M661 1072c-3-8 0-14 6-14 4-6 14-6 20-4 6-6 22-6 28 0 6 6 4 16 0 24h-50z" fill="url(#mt)"/>
<path d="M684 1078l4-16 6-12c4-3 9-1 10 5l3 13 4 10z" fill="#a5421e"/>
<path d="M691 1076l3-18M698 1076l0-22M704 1076l-1-14" stroke="#6d2a10" stroke-width="1.200"/>
<path d="M664 1077c8-4 14-4 22 0z" fill="#e6c580"/>
<!-- task view -->
<rect x="742" y="1058" width="20" height="20" rx="2" fill="#6a6a6a"/><rect x="749" y="1049" width="23" height="23" rx="2" fill="#eee"/><rect x="749" y="1058" width="13" height="14" fill="#b0b0b0"/>
<!-- copilot -->
<path d="M806 1051c5-2 9 0 10 4l-5 14c-1 4-5 6-9 5-5-2-5-9-3-13z" fill="url(#cp)"/>
<path d="M818 1052c5-1 8 4 8 9 0 6-4 13-9 13-5 1-7-1-8-3 3 0 5-2 6-6l3-9z" fill="url(#cq)"/>
<!-- explorer -->
<path d="M852 1052a2 2 0 0 1 2-2h8l4 4h16v6h-30z" fill="#e8a90a"/><rect x="852" y="1054" width="30" height="24" rx="2" fill="#fbd449"/><rect x="860" y="1069" width="14" height="4" rx="1" fill="#1f7fc4"/><rect x="860" y="1074" width="14" height="4" fill="#e2b12a"/>
<!-- edge -->
<circle cx="922" cy="1063" r="15" fill="url(#ed)"/><path d="M908 1063c1-8 8-13 15-13s14 6 14 13c0 4-4 5-7 5-2 0-4-1-4-3 1-3 1-5-4-5-6 0-8 7-5 13-5-1-9-5-9-10z" fill="#1a9fd8"/><path d="M917 1062c2-3 8-3 9 0 1 6 8 6 11 3-1 7-8 13-15 13-9-4-9-12-5-16z" fill="#0c4d9e"/>
<!-- store -->
<path d="M970 1053c0-5 13-5 13 0" stroke="#25a5e4" stroke-width="1.800"/><path d="M963 1055h28v20a3 3 0 0 1-3 3h-22a3 3 0 0 1-3-3z" fill="#f3f3f3"/><path d="M971 1060h5v5h-5z" fill="#e74c2e"/><path d="M977 1060h5v5h-5z" fill="#7fba00"/><path d="M971 1066h5v5h-5z" fill="#0a9fe0"/><path d="M977 1066h5v5h-5z" fill="#ffb900"/>
<!-- L -->
<rect x="1017.500" y="1048" width="29.500" height="30" fill="#1e3fa8"/>
<!-- opera -->
<ellipse cx="1087" cy="1063" rx="14.500" ry="15" fill="#e0141e"/><ellipse cx="1087" cy="1063" rx="6.500" ry="11" fill="#1a2146"/>
<!-- teams -->
<circle cx="1137.500" cy="1054.500" r="4.500" fill="#7b83eb"/><rect x="1134" y="1060" width="21" height="18" rx="7" fill="#5059c9"/><rect x="1126.500" y="1062" width="14" height="14" rx="1.500" fill="#4b53bc"/>
<circle cx="1153" cy="1052" r="10" fill="#2da5e0"/>
<!-- dropbox -->
<rect x="1182" y="1048" width="30" height="30" fill="#0061fe"/>
<path d="M1191 1054l6 4-6 4-6-4zM1203 1054l6 4-6 4-6-4zM1191 1062l6 4-6 4-6-4zM1203 1062l6 4-6 4-6-4zM1197 1067.500l6 4-6 3.500-6-3.500z" fill="#fff"/>
<!-- chrome -->
<rect x="1227" y="1038" width="50" height="50" rx="6" fill="#fff" fill-opacity=".06" stroke="#fff" stroke-opacity=".07"/>
<circle cx="1251.500" cy="1063" r="15" fill="#fbbc04"/>
<path d="M1251.500 1048a15 15 0 0 1 13 7.500h-13a7.500 7.500 0 0 0-6.500 3.800l-6.500-11.300a15 15 0 0 1 13-0z" fill="#ea4335"/>
<path d="M1238.500 1055.500a15 15 0 0 0 13 22.500l6.500-11.200a7.500 7.500 0 0 1-13-0z" fill="#34a853"/>
<circle cx="1251.500" cy="1063" r="7.800" fill="#fff"/><circle cx="1251.500" cy="1063" r="6" fill="#4285f4"/>
<rect x="1242" y="1085" width="19" height="3" rx="1.500" fill="#4dc4ff"/>
<!-- telegram -->
<circle cx="1308" cy="1063" r="14.500" fill="#2a9fd8"/><path d="M1300 1063l15-6-2.500 13-4-3-2.500 2.500-.5-4.500 6-5-7.500 4z" fill="#fff"/>
<circle cx="1320" cy="1053" r="9.500" fill="#8a8a8a"/>
<!-- utorrent -->
<circle cx="1363" cy="1063" r="15" fill="#79b42b"/>
<!-- viber -->
<path d="M1409 1048h18a6 6 0 0 1 6 6v14a6 6 0 0 1-6 6h-10l-5 5v-5h-3a6 6 0 0 1-6-6v-14a6 6 0 0 1 6-6z" fill="#f2f0ff"/><path d="M1410 1051h16a4 4 0 0 1 4 4v12a4 4 0 0 1-4 4h-16a4 4 0 0 1-4-4v-12a4 4 0 0 1 4-4z" fill="#7360f2"/><path d="M1413 1055c2-1 3 1 4 3s0 2-1 3c1 2 3 4 5 5 1-1 2-2 3-1s4 2 3 4-3 2-5 1c-5-2-9-6-10-11 0-2 0-3 1-4z" fill="#fff"/>
<!-- excel -->
<rect x="1463" y="1049" width="24" height="29" rx="1.500" fill="#107c41"/><rect x="1475" y="1049" width="12" height="7" fill="#33c481"/><rect x="1463" y="1049" width="12" height="7" fill="#21a366"/><rect x="1475" y="1063.500" width="12" height="7" fill="#185c37"/><rect x="1458.500" y="1055" width="15" height="15" rx="1" fill="#0a6a38"/>
<!-- indicators -->
<path d="M863.500 1085h7v3h-7zM1083.500 1085h7v3h-7zM1138.500 1085h7v3h-7zM1304.500 1085h7v3h-7zM1469.500 1085h7v3h-7z" fill="#8a8f99"/>
<!-- tray -->
<path d="M1584.500 1066l6.500-6 6.500 6" stroke="#fff" stroke-width="1.800"/>
<path d="M1622 1069a4 4 0 0 1-1-7.500 6 6 0 0 1 10-3 4 4 0 0 1 3 6v4z" fill="#d8d8d8"/><circle cx="1635" cy="1066" r="6" fill="#1a73d8"/>
<path d="M1716 1058.500a14 14 0 0 1 20 0M1719 1062a9.500 9.500 0 0 1 14 0M1722 1065.500a5 5 0 0 1 8 0" stroke="#fff" stroke-width="1.400"/><circle cx="1726" cy="1069" r="1.500" fill="#fff"/>
<path d="M1746 1060h4l5-4.500v15l-5-4.500h-4zM1758 1058a7 7 0 0 1 0 10M1761 1056a10 10 0 0 1 0 14" stroke="#e6e6e6" stroke-width="1.200"/>
<rect x="1776" y="1057" width="24" height="12.500" rx="3.500" stroke="#fff" stroke-width="1.400"/><rect x="1778.500" y="1059.500" width="8.500" height="7.500" rx="1.500" fill="#fff"/>
<!-- red annotation arrow -->
<path d="M1177.500 410L1166.500 500" stroke="#ff0000" stroke-width="4.200" stroke-linecap="round"/>
<path d="M1157.500 497L1174.700 498.500L1163 526z" fill="#ff0000"/>
</svg>
<div style="position:absolute;left:0;top:0;z-index:7">
<span class="w" style="left:42.500px;top:1043px;font-size:13px;line-height:16px;color:#222">1</span>
<span class="w" style="left:61px;top:1044px;font-size:14.500px;line-height:17px">4°C</span>
<span class="w" style="left:61px;top:1064px;font-size:15px;line-height:18px;color:#d0d3d8">Cloudy</span>
<span class="w" style="left:499px;top:1054px;font-size:17px;line-height:20px;color:#dfe3ea">Пошук</span>
<span class="w" style="left:1025px;top:1046px;font-size:24px;line-height:28px;font-weight:bold">L</span>
<span class="w" style="left:1149.500px;top:1044px;font-size:12.500px;line-height:15px;color:#10243f">1</span>
<span class="w" style="left:1130px;top:1062px;font-size:10px;line-height:13px;font-weight:bold">T</span>
<span class="w" style="left:1313px;top:1047px;font-size:12px;line-height:14px;color:#eee">42</span>
<span class="w" style="left:1353px;top:1044px;font-size:27px;line-height:32px;font-weight:bold">µ</span>
<span class="w" style="left:1462.500px;top:1055px;font-size:11px;line-height:14px;font-weight:bold">X</span>
<span class="w" style="left:1633px;top:1060px;font-size:9px;line-height:12px">i</span>
<span class="w" style="left:1667px;top:1054px;font-size:13.500px;line-height:17px">УКР</span>
<span class="w" style="left:1800px;top:1044px;width:93px;text-align:right;font-size:14.500px;line-height:17px">17:29</span>
<span class="w" style="left:1800px;top:1064px;width:93px;text-align:right;font-size:14px;line-height:17px">18.12.2025</span>
</div>
</body></html>
